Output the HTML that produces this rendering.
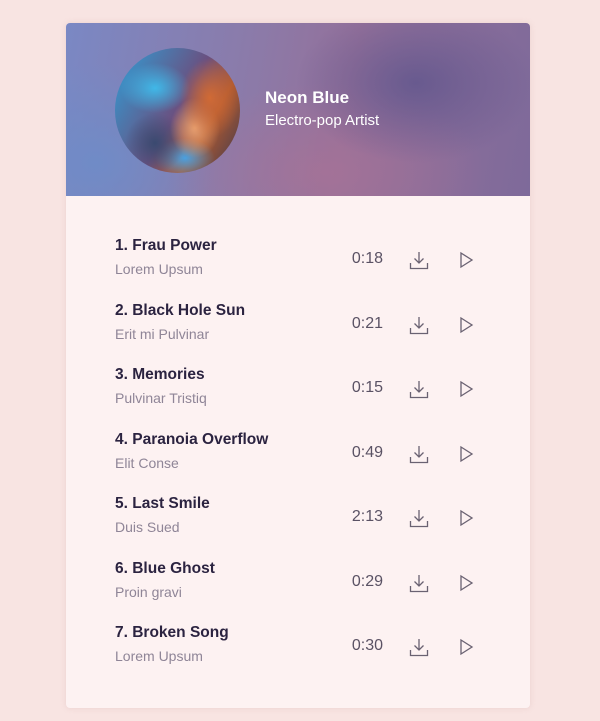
<!DOCTYPE html>
<html><head><style>
body{margin:0;width:600px;height:721px;background:#f8e4e2;font-family:"Liberation Sans",sans-serif;position:relative;overflow:hidden}
.card{position:absolute;left:66px;top:23px;width:464px;height:685px;background:#fdf2f2;border-radius:4px;overflow:hidden;box-shadow:0 0 6px rgba(200,150,150,.25)}
.hd{position:absolute;left:0;top:0;width:464px;height:173px;background:
radial-gradient(ellipse 120px 80px at 350px 60px,rgba(95,85,140,.8),transparent),
radial-gradient(ellipse 160px 90px at 260px 150px,rgba(170,115,150,.7),transparent),
radial-gradient(ellipse 120px 100px at 30px 140px,rgba(110,140,200,.9),transparent),
linear-gradient(100deg,#7a88c4 0%,#8c7aa8 40%,#94709a 60%,#7e6a9a 100%)}
.av{position:absolute;left:49px;top:25px;width:125px;height:125px;border-radius:50%;background:
radial-gradient(ellipse 30px 40px at 95px 50px,#d06a35,transparent),
radial-gradient(ellipse 25px 30px at 80px 80px,#e8a070,transparent),
radial-gradient(ellipse 35px 25px at 40px 40px,#40b8e8,transparent),
radial-gradient(ellipse 30px 30px at 40px 95px,#3a4a70,transparent),
radial-gradient(ellipse 30px 20px at 70px 110px,#4aa0e0,transparent),
linear-gradient(120deg,#2fa0d8,#6a5080 50%,#b05a30 70%,#3a3850)}
.nm{position:absolute;left:199px;top:65px;color:#fff;font-weight:bold;font-size:17px}
.sb{position:absolute;left:199px;top:89px;color:#fff;font-size:15px}
.row{position:absolute;left:49px;width:380px;height:50px}
.t{position:absolute;left:0;top:0;font-size:15.5px;font-weight:bold;color:#2b2340}
.s{position:absolute;left:0;top:24px;font-size:14px;color:#8f8597}
.d{position:absolute;right:112px;top:13px;font-size:16px;color:#5a5264}
.i1{position:absolute;left:294px;top:13px}
.i2{position:absolute;left:344px;top:14px}
</style></head><body>
<div class="card">
<div class="hd"><div class="av"></div><div class="nm">Neon Blue</div><div class="sb">Electro-pop Artist</div></div>
</div>
<div style="position:absolute;left:66px;top:23px">
<div class="row" style="top:214px"><div class="t">1. Frau Power</div><div class="s">Lorem Upsum</div><div class="d">0:18</div><svg class="i1" width="20" height="20" viewBox="0 0 20 20" fill="none" stroke="#6a6272" stroke-width="1.3"><path d="M10 2v11M5.5 8.5l4.5 4.5 4.5-4.5M1.5 13v5.5h17v-5.5"/></svg><svg class="i2" width="15" height="18" viewBox="0 0 15 18" fill="none" stroke="#6a6272" stroke-width="1.3"><path d="M2 2l11 7-11 7z"/></svg></div>
<div class="row" style="top:278.5px"><div class="t">2. Black Hole Sun</div><div class="s">Erit mi Pulvinar</div><div class="d">0:21</div><svg class="i1" width="20" height="20" viewBox="0 0 20 20" fill="none" stroke="#6a6272" stroke-width="1.3"><path d="M10 2v11M5.5 8.5l4.5 4.5 4.5-4.5M1.5 13v5.5h17v-5.5"/></svg><svg class="i2" width="15" height="18" viewBox="0 0 15 18" fill="none" stroke="#6a6272" stroke-width="1.3"><path d="M2 2l11 7-11 7z"/></svg></div>
<div class="row" style="top:343px"><div class="t">3. Memories</div><div class="s">Pulvinar Tristiq</div><div class="d">0:15</div><svg class="i1" width="20" height="20" viewBox="0 0 20 20" fill="none" stroke="#6a6272" stroke-width="1.3"><path d="M10 2v11M5.5 8.5l4.5 4.5 4.5-4.5M1.5 13v5.5h17v-5.5"/></svg><svg class="i2" width="15" height="18" viewBox="0 0 15 18" fill="none" stroke="#6a6272" stroke-width="1.3"><path d="M2 2l11 7-11 7z"/></svg></div>
<div class="row" style="top:407.5px"><div class="t">4. Paranoia Overflow</div><div class="s">Elit Conse</div><div class="d">0:49</div><svg class="i1" width="20" height="20" viewBox="0 0 20 20" fill="none" stroke="#6a6272" stroke-width="1.3"><path d="M10 2v11M5.5 8.5l4.5 4.5 4.5-4.5M1.5 13v5.5h17v-5.5"/></svg><svg class="i2" width="15" height="18" viewBox="0 0 15 18" fill="none" stroke="#6a6272" stroke-width="1.3"><path d="M2 2l11 7-11 7z"/></svg></div>
<div class="row" style="top:472px"><div class="t">5. Last Smile</div><div class="s">Duis Sued</div><div class="d">2:13</div><svg class="i1" width="20" height="20" viewBox="0 0 20 20" fill="none" stroke="#6a6272" stroke-width="1.3"><path d="M10 2v11M5.5 8.5l4.5 4.5 4.5-4.5M1.5 13v5.5h17v-5.5"/></svg><svg class="i2" width="15" height="18" viewBox="0 0 15 18" fill="none" stroke="#6a6272" stroke-width="1.3"><path d="M2 2l11 7-11 7z"/></svg></div>
<div class="row" style="top:536.5px"><div class="t">6. Blue Ghost</div><div class="s">Proin gravi</div><div class="d">0:29</div><svg class="i1" width="20" height="20" viewBox="0 0 20 20" fill="none" stroke="#6a6272" stroke-width="1.3"><path d="M10 2v11M5.5 8.5l4.5 4.5 4.5-4.5M1.5 13v5.5h17v-5.5"/></svg><svg class="i2" width="15" height="18" viewBox="0 0 15 18" fill="none" stroke="#6a6272" stroke-width="1.3"><path d="M2 2l11 7-11 7z"/></svg></div>
<div class="row" style="top:601px"><div class="t">7. Broken Song</div><div class="s">Lorem Upsum</div><div class="d">0:30</div><svg class="i1" width="20" height="20" viewBox="0 0 20 20" fill="none" stroke="#6a6272" stroke-width="1.3"><path d="M10 2v11M5.5 8.5l4.5 4.5 4.5-4.5M1.5 13v5.5h17v-5.5"/></svg><svg class="i2" width="15" height="18" viewBox="0 0 15 18" fill="none" stroke="#6a6272" stroke-width="1.3"><path d="M2 2l11 7-11 7z"/></svg></div>
</div>
</body></html>
